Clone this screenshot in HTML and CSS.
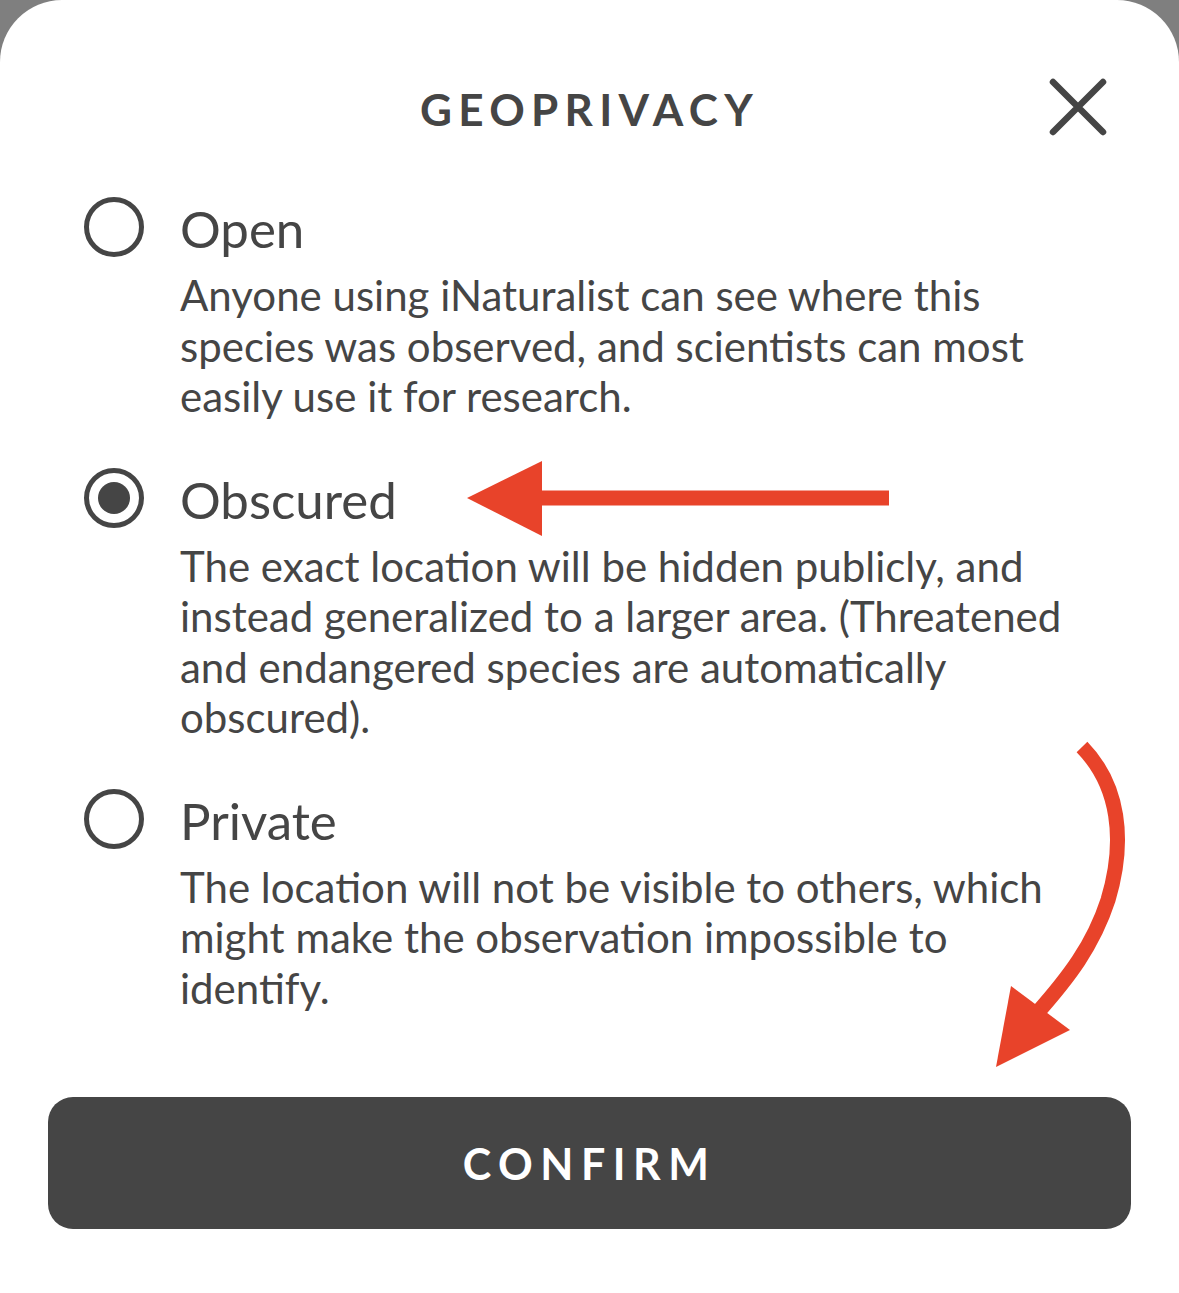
FILE: index.html
```html
<!DOCTYPE html>
<html lang="en">
<head>
<meta charset="utf-8">
<title>Geoprivacy</title>
<link rel="stylesheet" href="styles.css">
</head>
<body>
<div class="sheet">
  <header class="head">
    <h1 class="title">GEOPRIVACY</h1>
    <button class="close" aria-label="Close">
      <svg width="60" height="60" viewBox="0 0 60 60"><path d="M5 5 L55 55 M55 5 L5 55" stroke="#454545" stroke-width="6.5" stroke-linecap="round" fill="none"/></svg>
    </button>
  </header>
  <div class="options">
    <div class="option">
      <span class="radio"></span>
      <div class="body">
        <div class="label">Open</div>
        <p class="desc">Anyone using iNaturalist can see where this species was observed, and scientists can most easily use it for research.</p>
      </div>
    </div>
    <div class="option">
      <span class="radio checked"></span>
      <div class="body">
        <div class="label">Obscured</div>
        <p class="desc">The exact location will be hidden publicly, and instead generalized to a larger area. (Threatened and endangered species are automatically obscured).</p>
      </div>
    </div>
    <div class="option">
      <span class="radio"></span>
      <div class="body">
        <div class="label">Private</div>
        <p class="desc">The location will not be visible to others, which might make the observation impossible to identify.</p>
      </div>
    </div>
  </div>
  <button class="confirm">CONFIRM</button>
  <svg class="annot" width="1179" height="1293" viewBox="0 0 1179 1293">
    <rect x="536" y="490.5" width="353" height="15" fill="#e8432a"/>
    <polygon points="467,498 542,461 542,536" fill="#e8432a"/>
    <path d="M1082 747 C1119 785 1126 840 1108 900 C1093 946 1068 978 1038 1012" stroke="#e8432a" stroke-width="15" fill="none"/>
    <polygon points="996,1067 1011,986 1070,1030" fill="#e8432a"/>
  </svg>
</div>
</body>
</html>
```
FILE: styles.css
```css
html, body {
  margin: 0;
  padding: 0;
}
body {
  background: #7f7f7f;
  font-family: Lato, "Noto Sans", sans-serif;
  color: #454545;
}
.sheet {
  position: relative;
  width: 1179px;
  height: 1293px;
  background: #ffffff;
  border-radius: 62px 62px 0 0;
  display: flex;
  flex-direction: column;
  box-sizing: border-box;
  padding: 79px 84px 0 84px;
}
.head {
  position: relative;
  display: flex;
  justify-content: center;
  align-items: center;
  height: 60px;
}
.title {
  margin: 0;
  font-size: 44px;
  font-weight: 700;
  letter-spacing: 6.3px;
  line-height: 60px;
}
.close {
  position: absolute;
  right: -13px;
  top: -2px;
  width: 60px;
  height: 60px;
  padding: 0;
  border: 0;
  background: none;
  display: block;
}
.close svg { display: block; }
.options {
  display: flex;
  flex-direction: column;
  gap: 48px;
  margin-top: 60px;
}
.option {
  display: flex;
  gap: 36px;
  align-items: flex-start;
}
.radio {
  flex: none;
  width: 60px;
  height: 60px;
  box-sizing: border-box;
  border: 5px solid #454545;
  border-radius: 50%;
  margin-top: -2px;
  display: flex;
  align-items: center;
  justify-content: center;
}
.radio.checked::after {
  content: "";
  width: 32px;
  height: 32px;
  border-radius: 50%;
  background: #454545;
}
.body {
  flex: 1;
  min-width: 0;
}
.label {
  font-size: 51px;
  line-height: 60px;
}
.desc {
  margin: 11px 0 0 0;
  font-size: 42px;
  line-height: 50.5px;
}
.confirm {
  margin-top: 84px;
  margin-left: -36px;
  margin-right: -36px;
  height: 132px;
  border: 0;
  border-radius: 25px;
  background: #454545;
  color: #ffffff;
  font-family: Lato, "Noto Sans", sans-serif;
  font-size: 43px;
  font-weight: 700;
  letter-spacing: 7.5px;
  padding: 0;
}
.annot {
  position: absolute;
  left: 0;
  top: 0;
  pointer-events: none;
}
```
